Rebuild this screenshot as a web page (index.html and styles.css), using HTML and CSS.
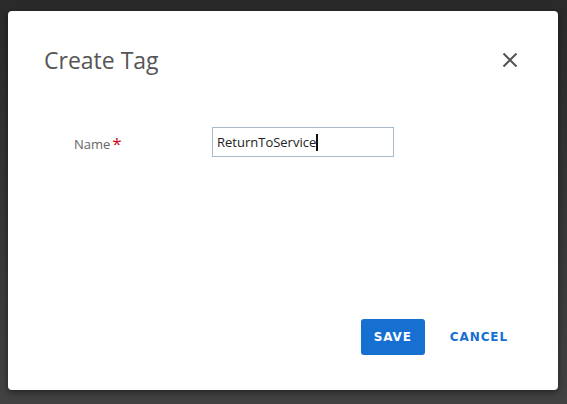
FILE: index.html
```html
<!DOCTYPE html>
<html>
<head>
<meta charset="utf-8">
<link rel="stylesheet" href="styles.css">
</head>
<body>
<div class="backdrop">
  <div class="dialog">
    <div class="header">
      <h1 class="title">Create Tag</h1>
      <button class="close" aria-label="Close">
        <svg width="16" height="16" viewBox="0 0 16 16"><path d="M1.5 1.5 L14.5 14.5 M14.5 1.5 L1.5 14.5" stroke="#555" stroke-width="2" fill="none"/></svg>
      </button>
    </div>
    <div class="body">
      <div class="field">
        <label class="label">Name<span class="req">*</span></label>
        <div class="input"><span class="value">ReturnToService</span><span class="caret"></span></div>
      </div>
    </div>
    <div class="footer">
      <button class="btn primary">SAVE</button>
      <button class="btn link">CANCEL</button>
    </div>
  </div>
</div>
</body>
</html>
```
FILE: styles.css
```css
html, body { margin: 0; padding: 0; }
body { width: 567px; height: 404px; overflow: hidden; font-family: "Open Sans", sans-serif; }
.backdrop {
  width: 567px; height: 404px; box-sizing: border-box;
  background: linear-gradient(#2a2a2a, #424242);
  padding: 11px 9px 14px 8px;
}
.dialog {
  background: #fff; border-radius: 4px; height: 379px;
  display: flex; flex-direction: column;
  box-shadow: 0 2px 6px rgba(0,0,0,0.5);
}
.header { display: flex; align-items: center; justify-content: space-between; padding: 34px 40px 0 36px; height: 30px; }
.title { margin: 0; font-weight: 400; font-size: 23px; color: #555; letter-spacing: 0; }
.close { border: 0; background: none; padding: 0; width: 16px; height: 16px; display: block; }
.close svg { display: block; }
.body { flex: 1; padding: 52px 0 0 66px; }
.field { display: flex; align-items: center; }
.label { width: 138px; font-size: 13px; color: #666; }
.req { color: #d0021b; font-size: 17px; margin-left: 2px; position: relative; top: 1px; }
.input { width: 176px; height: 28px; border: 1px solid #a9b9c9; box-sizing: content-box; display: flex; align-items: center; padding-left: 4px; font-size: 13px; color: #222; }
.caret { display: inline-block; width: 2px; height: 17px; background: #111; margin-left: 0; }
.footer { display: flex; justify-content: flex-end; align-items: center; padding: 0 50px 35px 0; gap: 25px; }
.btn { font-family: "DejaVu Sans", Verdana, sans-serif; font-weight: 700; font-size: 12px; letter-spacing: 0.9px; border: 0; cursor: pointer; }
.primary { background: #1670d2; color: #fff; height: 36px; width: 64px; border-radius: 3px; padding: 0; }
.link { background: none; color: #1670d2; padding: 0; }
```
